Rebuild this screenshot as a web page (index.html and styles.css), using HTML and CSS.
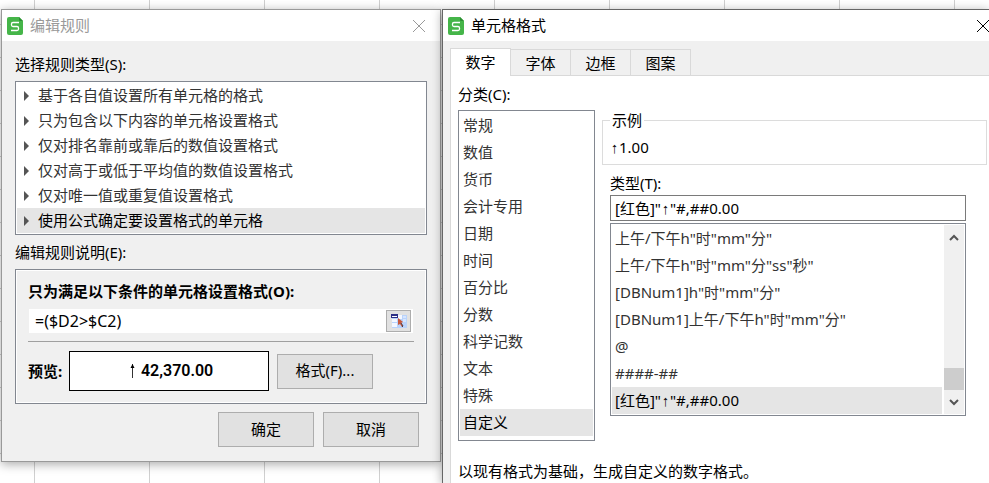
FILE: index.html
```html
<!DOCTYPE html>
<html lang="zh-CN">
<head>
  <meta charset="UTF-8">
  <meta name="viewport" content="width=device-width, initial-scale=1.0">
  <title>编辑规则</title>
  <link rel="stylesheet" href="styles.css">
</head>
<body>
  <main class="desktop">
    <section class="window window-rule" aria-labelledby="rule-title">
      <header class="titlebar">
        <svg class="app-icon" width="17" height="18" viewBox="0 0 17 18" aria-hidden="true">
          <path d="M2 0h10l4 4v12a2 2 0 0 1-2 2H2a2 2 0 0 1-2-2V2a2 2 0 0 1 2-2z" fill="#45b549"/>
          <path d="M12 0l4 4h-3a1 1 0 0 1-1-1z" fill="#2c8f33"/>
          <path d="M12 5.500H6a1.500 1.500 0 0 0-1.500 1.500v1a1.500 1.500 0 0 0 1.500 1.500h4a1.500 1.500 0 0 1 1.500 1.500v1a1.500 1.500 0 0 1-1.500 1.500H4" fill="none" stroke="#fff" stroke-width="1.300"/>
        </svg>
        <h1 class="title" id="rule-title">编辑规则</h1>
        <button class="close" type="button" aria-label="关闭">
          <svg width="14" height="14" viewBox="0 0 14 14"><path d="M1 1l12 12M13 1L1 13" stroke="currentColor" stroke-width="1"/></svg>
        </button>
      </header>
      <div class="rule-body">
        <h2 class="label" id="type-label">选择规则类型(S):</h2>
        <ul class="listbox rule-list" role="listbox" aria-labelledby="type-label">
          <li role="option" aria-selected="false">基于各自值设置所有单元格的格式</li>
          <li role="option" aria-selected="false">只为包含以下内容的单元格设置格式</li>
          <li role="option" aria-selected="false">仅对排名靠前或靠后的数值设置格式</li>
          <li role="option" aria-selected="false">仅对高于或低于平均值的数值设置格式</li>
          <li role="option" aria-selected="false">仅对唯一值或重复值设置格式</li>
          <li role="option" aria-selected="true">使用公式确定要设置格式的单元格</li>
        </ul>
        <h2 class="label label-desc">编辑规则说明(E):</h2>
        <div class="group">
          <label class="strong" for="formula">只为满足以下条件的单元格设置格式(O):</label>
          <div class="formula">
            <input type="text" id="formula" value="=($D2&gt;$C2)">
            <button class="picker" type="button" aria-label="选择区域">
              <svg width="16" height="14" viewBox="0 0 16 14">
                <path d="M1 1h15v13H1z" fill="#b9d3fb"/>
                <path d="M1 5h5v3H1zM7 1h4v4H7zM1 9h5v4H1z" fill="#f3f7ff"/>
                <path d="M12 2h3v2h-3zM12 5h3v3h-3z" fill="#d6e5ff"/>
                <path d="M0 0h7v4H0z" fill="#2b2f86"/>
                <path d="M1 2h5v1H1z" fill="#fff"/>
                <path d="M7 4l5 4-2 1 2 3-1 1-2-3-2 1z" fill="#c8573a"/>
                <path d="M10 9l2 3-1 1" fill="none" stroke="#4a3a4a"/>
              </svg>
            </button>
          </div>
          <div class="preview-row">
            <span class="strong">预览:</span>
            <output class="preview"><svg width="7" height="16" viewBox="0 0 7 16" aria-hidden="true"><path d="M3.500 1v14" stroke="#333"/><path d="M3.500 1l2 4h-4z"/></svg>42,370.00</output>
            <button class="btn" type="button">格式(F)...</button>
          </div>
        </div>
        <div class="actions">
          <button class="btn" type="button">确定</button>
          <button class="btn" type="button">取消</button>
        </div>
      </div>
    </section>

    <section class="window window-format" aria-labelledby="format-title">
      <header class="titlebar">
        <svg class="app-icon" width="17" height="18" viewBox="0 0 17 18" aria-hidden="true">
          <path d="M2 0h10l4 4v12a2 2 0 0 1-2 2H2a2 2 0 0 1-2-2V2a2 2 0 0 1 2-2z" fill="#45b549"/>
          <path d="M12 0l4 4h-3a1 1 0 0 1-1-1z" fill="#2c8f33"/>
          <path d="M12 5.500H6a1.500 1.500 0 0 0-1.500 1.500v1a1.500 1.500 0 0 0 1.500 1.500h4a1.500 1.500 0 0 1 1.500 1.500v1a1.500 1.500 0 0 1-1.500 1.500H4" fill="none" stroke="#fff" stroke-width="1.300"/>
        </svg>
        <h1 class="title" id="format-title">单元格格式</h1>
        <button class="close" type="button" aria-label="关闭">
          <svg width="14" height="14" viewBox="0 0 14 14"><path d="M1 1l12 12M13 1L1 13" stroke="currentColor" stroke-width="1"/></svg>
        </button>
      </header>
      <div class="tabs" role="tablist">
        <button type="button" role="tab" aria-selected="true">数字</button>
        <button type="button" role="tab" aria-selected="false">字体</button>
        <button type="button" role="tab" aria-selected="false">边框</button>
        <button type="button" role="tab" aria-selected="false">图案</button>
      </div>
      <div class="pane" role="tabpanel">
        <h2 class="label" id="category-label">分类(C):</h2>
        <div class="columns">
          <ul class="listbox category-list" role="listbox" aria-labelledby="category-label">
            <li role="option" aria-selected="false">常规</li>
            <li role="option" aria-selected="false">数值</li>
            <li role="option" aria-selected="false">货币</li>
            <li role="option" aria-selected="false">会计专用</li>
            <li role="option" aria-selected="false">日期</li>
            <li role="option" aria-selected="false">时间</li>
            <li role="option" aria-selected="false">百分比</li>
            <li role="option" aria-selected="false">分数</li>
            <li role="option" aria-selected="false">科学记数</li>
            <li role="option" aria-selected="false">文本</li>
            <li role="option" aria-selected="false">特殊</li>
            <li role="option" aria-selected="true">自定义</li>
          </ul>
          <div class="details">
            <fieldset class="sample">
              <legend>示例</legend>
              <output>↑1.00</output>
            </fieldset>
            <div class="type">
              <label class="label" for="type-code">类型(T):</label>
              <input type="text" id="type-code" value='[红色]"↑"#,##0.00'>
              <div class="listbox type-box">
                <ul class="type-list" role="listbox" aria-label="类型">
                  <li role="option" aria-selected="false">上午/下午h"时"mm"分"</li>
                  <li role="option" aria-selected="false">上午/下午h"时"mm"分"ss"秒"</li>
                  <li role="option" aria-selected="false">[DBNum1]h"时"mm"分"</li>
                  <li role="option" aria-selected="false">[DBNum1]上午/下午h"时"mm"分"</li>
                  <li role="option" aria-selected="false">@</li>
                  <li role="option" aria-selected="false">####-##</li>
                  <li role="option" aria-selected="true">[红色]"↑"#,##0.00</li>
                </ul>
                <div class="scrollbar">
                  <button type="button" aria-label="向上滚动"><svg width="10" height="7" viewBox="0 0 10 7"><path d="M1 6l4-4 4 4" fill="none" stroke="#555" stroke-width="2"/></svg></button>
                  <div class="thumb"></div>
                  <button type="button" aria-label="向下滚动"><svg width="10" height="7" viewBox="0 0 10 7"><path d="M1 1l4 4 4-4" fill="none" stroke="#555" stroke-width="2"/></svg></button>
                </div>
              </div>
            </div>
          </div>
        </div>
        <p class="hint">以现有格式为基础，生成自定义的数字格式。</p>
      </div>
    </section>
  </main>
</body>
</html>
```

FILE: styles.css
```css
* {
  box-sizing: border-box;
}
body {
  margin: 0;
  font-family: "Noto Sans", "Liberation Mono", "Noto Sans CJK SC", sans-serif;
  font-size: 15px;
  line-height: 20px;
  color: #000;
}
button,
input {
  font: inherit;
  color: inherit;
}
ul,
h1,
h2,
p {
  margin: 0;
  padding: 0;
  font-size: 15px;
  font-weight: normal;
  list-style: none;
}
svg {
  display: block;
}

/* spreadsheet grid behind the windows */
.desktop {
  display: grid;
  grid-template-columns: 440fr 547fr;
  column-gap: 1px;
  height: 100vh;
  padding: 9px 0 0 1px;
  overflow: hidden;
  background-color: #fff;
  background-image:
    linear-gradient(90deg, #d0d0d0 1px, transparent 1px),
    linear-gradient(#d0d0d0 1px, transparent 1px);
  background-size: 115px 33px;
  background-position: 34px 24px;
}
.window {
  background: #f0f0f0;
  border: 1px solid #999;
  box-shadow: 0 2px 10px rgba(0, 0, 0, 0.35);
}
.window-rule {
  align-self: start;
}
.window-format {
  display: flex;
  flex-direction: column;
  border-color: #666;
  border-width: 1px 0 0 1px;
}

.titlebar {
  display: flex;
  align-items: center;
  height: 31px;
  padding-left: 5px;
  background: #fff;
}
.title {
  flex: 1;
  padding: 0 0 2px 6px;
}
.window-rule .titlebar {
  padding-right: 14px;
  color: #999;
}
.close {
  padding: 0;
  border: 0;
  background: none;
}
.window-format .close {
  margin-right: -1px;
}

.label {
  display: block;
}
.strong {
  font-weight: bold;
}
.listbox {
  padding: 1px;
  background: #fff;
  border: 1px solid #828790;
  color: #333;
}
li {
  white-space: nowrap;
}
li[aria-selected="true"] {
  background: #e5e5e5;
  color: #000;
}
.btn {
  width: 96px;
  height: 35px;
  padding: 0 0 2px;
  background: #e1e1e1;
  border: 1px solid #adadad;
}

.rule-body {
  padding: 13px 13px 14px;
}
.rule-list {
  margin-top: 7px;
}
.rule-list li {
  display: flex;
  align-items: center;
  height: 25px;
  padding-bottom: 2px;
}
.rule-list li::before {
  content: "";
  margin: 2px 9px 0 7px;
  border: 5px solid transparent;
  border-left-color: #555;
  border-right: 0;
}
.label-desc {
  margin: 7px 0;
}
.group {
  padding: 11px 12px 12px;
  border: 1px solid #828790;
  box-shadow: inset 1px 1px #fff, inset -1px -1px #fff;
}
.group label {
  display: block;
}
.formula {
  display: flex;
  align-items: center;
  height: 24px;
  margin: 8px 1px 0;
  padding-right: 2px;
  background: #fff;
}
.formula input {
  flex: 1;
  min-width: 0;
  padding: 0 6px;
  border: 0;
  background: none;
  font-size: 16px;
}
.picker {
  display: grid;
  place-items: center;
  width: 25px;
  height: 22px;
  padding: 0;
  background: #e1e1e1;
  border: 1px solid #adadad;
}
.preview-row {
  display: flex;
  align-items: center;
  margin-top: 8px;
  padding-top: 9px;
  border-top: 1px solid #a0a0a0;
}
.preview {
  display: flex;
  flex: 1;
  align-items: center;
  justify-content: center;
  gap: 5px;
  height: 40px;
  margin: 0 8px 0 7px;
  padding-left: 4px;
  background: #fff;
  border: 1px solid #000;
  font-family: Roboto, sans-serif;
  font-size: 16px;
  font-weight: 600;
}
.preview-row .btn {
  margin-right: 41px;
}
.actions {
  display: flex;
  justify-content: flex-end;
  gap: 9px;
  margin-top: 8px;
  padding-right: 8px;
}

.tabs {
  display: flex;
  align-items: flex-end;
  height: 34px;
  margin-left: 7px;
}
.tabs button {
  width: 60px;
  height: 26px;
  padding: 0;
  background: #f0f0f0;
  border: 1px solid #d9d9d9;
  border-width: 1px 1px 0 0;
}
.tabs button[aria-selected="true"] {
  z-index: 1;
  width: 61px;
  height: 28px;
  margin-bottom: -1px;
  padding-bottom: 2px;
  background: #fff;
  border-left-width: 1px;
}
.pane {
  flex: 1;
  margin-left: 7px;
  padding: 8px 2px 0 7px;
  background: #fff;
  border: 1px solid #d9d9d9;
  border-width: 1px 0 0 1px;
}
.columns {
  display: grid;
  grid-template-columns: 137px 1fr;
  gap: 7px;
  margin-top: 6px;
}
.category-list {
  padding-bottom: 4px;
}
.category-list li,
.type-list li {
  height: 27px;
  padding-left: 3px;
  line-height: 26px;
}
.sample {
  min-width: 0;
  margin: 0;
  padding: 7px 8px 7px 7px;
  border: 1px solid #dcdcdc;
}
.sample legend {
  padding: 0 2px;
}
.type {
  margin: 8px 21px 0 8px;
}
.type input {
  width: 100%;
  height: 26px;
  margin-top: 2px;
  padding: 0 4px;
  border: 1px solid #7a7a7a;
}
.type-box {
  display: flex;
  gap: 2px;
  margin-top: 2px;
}
.type-list {
  flex: 1;
}
.scrollbar {
  display: flex;
  flex-direction: column;
  width: 20px;
  background: #f0f0f0;
}
.scrollbar button {
  display: grid;
  place-items: center;
  height: 24px;
  padding: 0;
  border: 0;
  background: none;
}
.thumb {
  height: 22px;
  margin-top: auto;
  background: #cdcdcd;
}
.hint {
  margin-top: 20px;
}
```
